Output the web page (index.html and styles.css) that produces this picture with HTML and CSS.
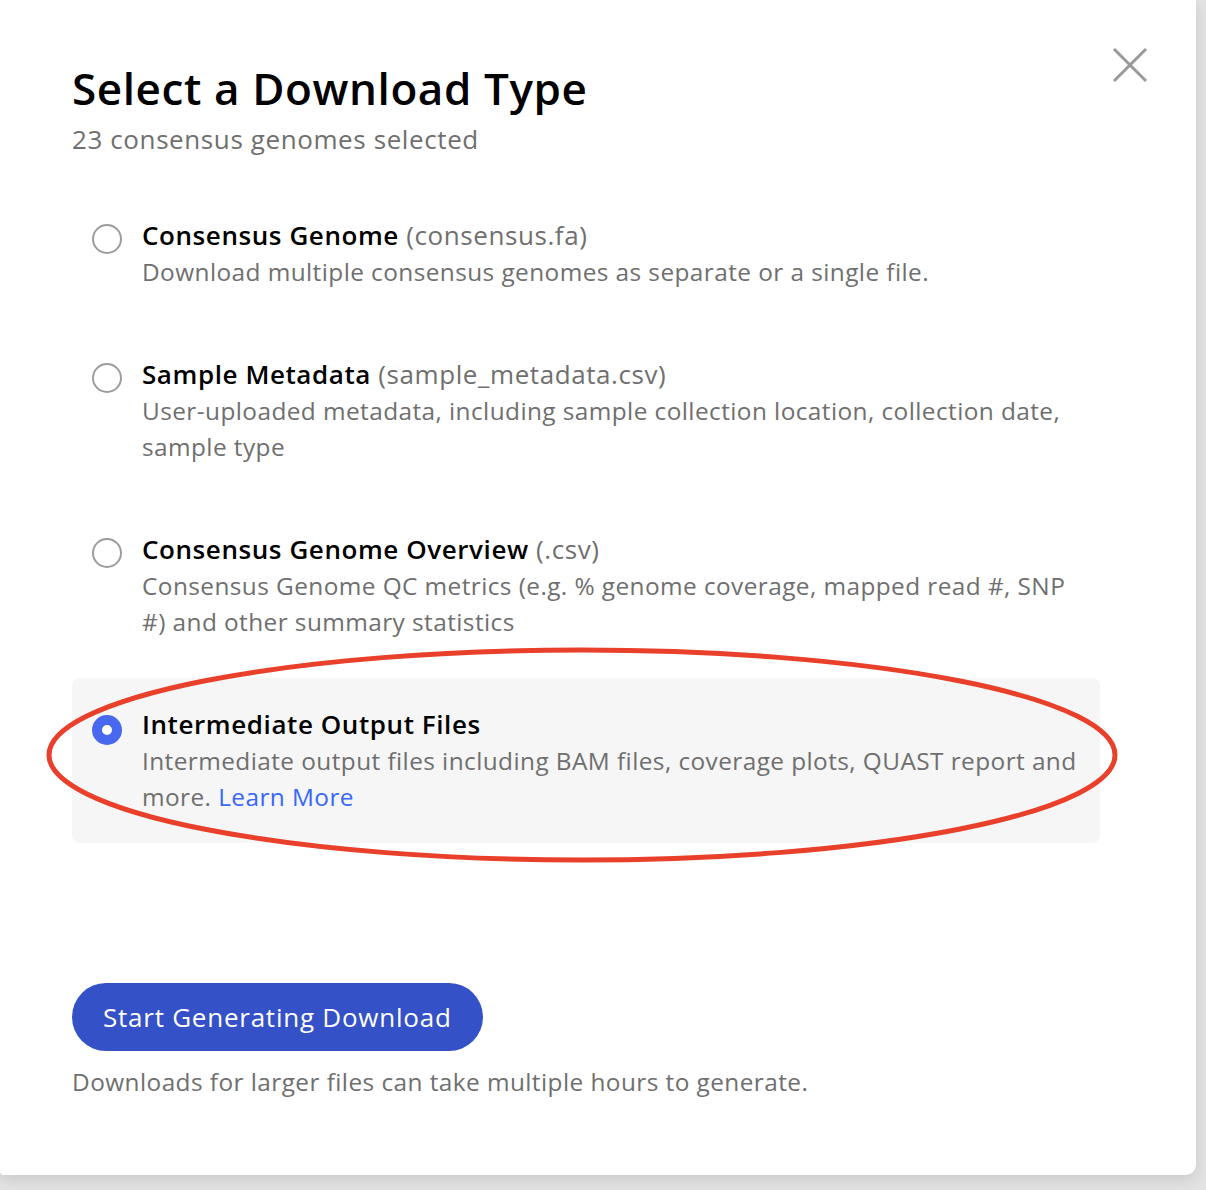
FILE: index.html
```html
<!DOCTYPE html>
<html lang="en">
<head>
<meta charset="utf-8">
<title>Select a Download Type</title>
<link rel="stylesheet" href="styles.css">
</head>
<body>
<div class="modal">
  <button class="close" aria-label="Close">
    <svg width="36" height="36" viewBox="0 0 36 36"><path d="M2 2 L34 34 M34 2 L2 34" stroke="#999" stroke-width="3" fill="none"/></svg>
  </button>
  <header class="head">
    <h1 class="title">Select a Download Type</h1>
    <div class="subtitle">23 consensus genomes selected</div>
  </header>
  <div class="options">
    <div class="option">
      <span class="radio"></span>
      <div class="text">
        <div class="opt-title"><b>Consensus Genome</b> <span class="ext">(consensus.fa)</span></div>
        <div class="desc">Download multiple consensus genomes as separate or a single file.</div>
      </div>
    </div>
    <div class="option">
      <span class="radio"></span>
      <div class="text">
        <div class="opt-title"><b>Sample Metadata</b> <span class="ext">(sample_metadata.csv)</span></div>
        <div class="desc">User-uploaded metadata, including sample collection location, collection date, sample type</div>
      </div>
    </div>
    <div class="option">
      <span class="radio"></span>
      <div class="text">
        <div class="opt-title"><b>Consensus Genome Overview</b> <span class="ext">(.csv)</span></div>
        <div class="desc">Consensus Genome QC metrics (e.g. % genome coverage, mapped read #, SNP #) and other summary statistics</div>
      </div>
    </div>
    <div class="option selected">
      <span class="radio checked"></span>
      <div class="text">
        <div class="opt-title"><b>Intermediate Output Files</b></div>
        <div class="desc">Intermediate output files including BAM files, coverage plots, QUAST report and more. <a class="link" href="#">Learn More</a></div>
      </div>
      <svg class="ring" width="1080" height="230" viewBox="0 0 1080 230"><ellipse cx="536" cy="108" rx="533" ry="105" fill="none" stroke="#e8402a" stroke-width="5"/></svg>
    </div>
  </div>
  <div class="footer">
    <button class="primary">Start Generating Download</button>
    <div class="note">Downloads for larger files can take multiple hours to generate.</div>
  </div>
</div>
</body>
</html>
```
FILE: styles.css
```css
* { box-sizing: border-box; }
html, body { margin: 0; padding: 0; }
body {
  width: 1206px;
  height: 1190px;
  background: #e3e3e3;
  font-family: "Open Sans", "Noto Sans", sans-serif;
  overflow: hidden;
}
.modal {
  position: relative;
  width: 1196px;
  height: 1175px;
  background: #fff;
  border-radius: 0 0 10px 4px;
  box-shadow: 0 4px 16px rgba(0,0,0,0.12);
  padding: 52px 96px 0 72px;
}
.close {
  position: absolute;
  top: 47px;
  right: 48px;
  width: 36px;
  height: 36px;
  padding: 0;
  border: 0;
  background: none;
}
.close svg { display: block; }
.title {
  margin: 0;
  font-size: 44px;
  font-weight: 600;
  line-height: 72px;
  letter-spacing: 0.6px;
  color: #000;
}
.subtitle {
  margin-top: 1px;
  font-size: 26px;
  line-height: 28px;
  letter-spacing: 0.6px;
  color: #6f6f6f;
}
.options {
  margin-top: 36px;
  display: flex;
  flex-direction: column;
  gap: 10px;
  width: 1028px;
}
.option {
  position: relative;
  display: flex;
  gap: 20px;
  padding: 28px 20px;
  border-radius: 8px;
}
.option.selected { background: #f6f6f6; }
.radio {
  flex: none;
  width: 30px;
  height: 30px;
  margin-top: 7px;
  border: 2px solid #9c9c9c;
  border-radius: 50%;
  background: #fff;
}
.radio.checked {
  margin-top: 9px;
  border: 10px solid #4768ef;
  background: #fff;
}
.opt-title {
  font-size: 26px;
  line-height: 37px;
  letter-spacing: 0.58px;
  color: #000;
}
.opt-title b { font-weight: 600; }
.ext { color: #6f6f6f; }
.desc {
  font-size: 24.4px;
  line-height: 36px;
  letter-spacing: 0.42px;
  color: #6f6f6f;
}
.link { color: #3867fa; text-decoration: none; }
.ring {
  position: absolute;
  left: -26px;
  top: -31px;
  pointer-events: none;
}
.footer { margin-top: 140px; }
.primary {
  height: 68px;
  padding: 0 31px;
  border: 0;
  border-radius: 34px;
  background: #3451c7;
  color: #fff;
  font-family: inherit;
  font-size: 26px;
  letter-spacing: 0.76px;
}
.note {
  margin-top: 13px;
  font-size: 24.4px;
  line-height: 36px;
  letter-spacing: 0.43px;
  color: #6f6f6f;
}
```
